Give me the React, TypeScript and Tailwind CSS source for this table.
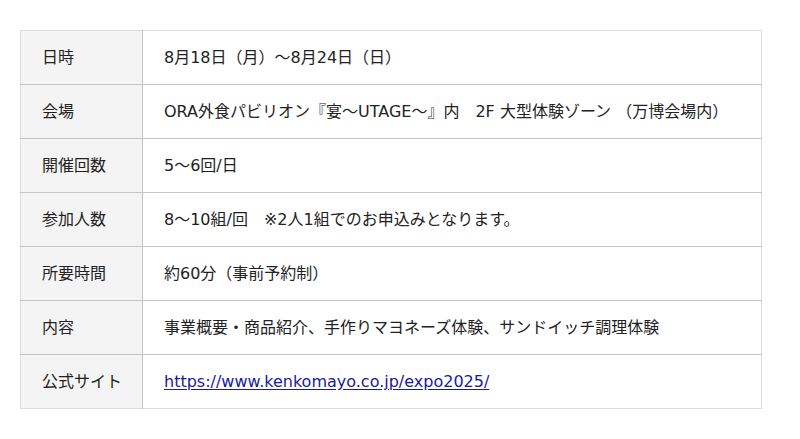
const rows: { label: string; value: React.ReactNode }[] = [
  { label: '日時', value: '8月18日（月）〜8月24日（日）' },
  {
    label: '会場',
    value: 'ORA外食パビリオン『宴〜UTAGE〜』内　2F 大型体験ゾーン （万博会場内）',
  },
  { label: '開催回数', value: '5〜6回/日' },
  { label: '参加人数', value: '8〜10組/回　※2人1組でのお申込みとなります。' },
  { label: '所要時間', value: '約60分（事前予約制）' },
  { label: '内容', value: '事業概要・商品紹介、手作りマヨネーズ体験、サンドイッチ調理体験' },
  {
    label: '公式サイト',
    value: (
      <a href="#" className="text-[#1a1a9c] underline underline-offset-2">
        https://www.kenkomayo.co.jp/expo2025/
      </a>
    ),
  },
];

export default function App() {
  return (
    <div
      className="w-[800px] h-[439px] bg-white pt-[30px] pl-[20px]"
      style={{ fontFamily: '"DejaVu Sans", "Noto Sans CJK JP", sans-serif' }}
    >
      <table className="w-[742px] border-collapse border border-[#dcdcdc] text-[16px] text-[#222]">
        <tbody>
          {rows.map((row) => (
            <tr key={row.label} className="h-[54px] border-b border-[#c4c4c4] last:border-b-[#dcdcdc]">
              <td className="w-[122px] bg-[#f4f4f4] pl-[21px] border-r border-[#c4c4c4] align-middle">
                {row.label}
              </td>
              <td className="pl-[21px] align-middle">{row.value}</td>
            </tr>
          ))}
        </tbody>
      </table>
    </div>
  );
}
